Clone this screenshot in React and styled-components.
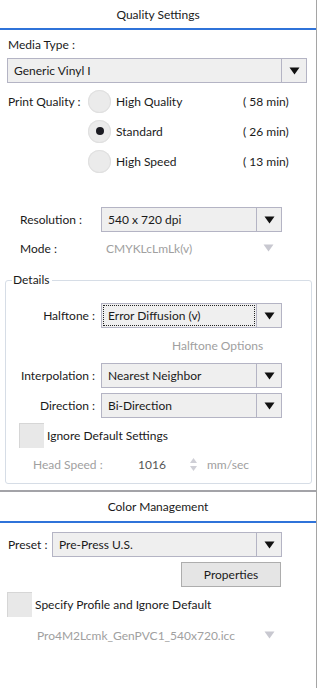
import React from "react";
import styled, { createGlobalStyle } from "styled-components";

const Global = createGlobalStyle`
  body {
    margin: 0;
    background: #fff;
    font-family: Lato, "Noto Sans", sans-serif;
    font-size: 12px;
    color: #1a1a1a;
  }
`;

const Panel = styled.div`
  width: 316px;
  min-height: 688px;
  border-right: 1px solid #a5a5a5;
  display: flex;
  flex-direction: column;
`;

const SectionHeader = styled.div`
  height: ${p => p.h || 28}px;
  display: flex;
  align-items: center;
  justify-content: center;
  border-bottom: 2px solid #2f73d9;
  border-top: ${p => (p.sep ? "2px solid #a3a3a8" : "none")};
  margin-top: ${p => p.top || 0}px;
`;

const Label = styled.div`
  height: 16px;
  line-height: 16px;
  padding-left: ${p => p.left || 0}px;
  margin-top: ${p => p.top || 0}px;
  white-space: nowrap;
`;

const SelectBox = styled.div`
  box-sizing: border-box;
  width: ${p => p.w}px;
  height: 25px;
  margin-left: ${p => p.left || 0}px;
  margin-top: ${p => p.top || 0}px;
  border: 1px solid #b4b4c4;
  background: #efefef;
  display: flex;
  flex-shrink: 0;
`;

const SelectText = styled.div`
  flex: 1;
  display: flex;
  align-items: center;
  padding-left: 4px;
  margin: 1px;
  border: 1px ${p => (p.focus ? "dotted #222" : "solid transparent")};
  white-space: nowrap;
`;

const ArrowCell = styled.div`
  width: 24px;
  border-left: 1px solid #b4b4c4;
  display: flex;
  align-items: center;
  justify-content: center;
`;

const Arrow = ({ color = "#111" }) => (
  <svg width="11" height="8" viewBox="0 0 11 8">
    <polygon points="0.5,0.5 10.5,0.5 5.5,7.5" fill={color} />
  </svg>
);

const Select = ({ w, left, top, focus, children }) => (
  <SelectBox w={w} left={left} top={top}>
    <SelectText focus={focus}>{children}</SelectText>
    <ArrowCell>
      <Arrow />
    </ArrowCell>
  </SelectBox>
);

const QualityBlock = styled.div`
  display: flex;
  margin-top: 3px;
  padding-left: 8px;
`;

const QualityLabel = styled.div`
  width: 80px;
  height: 30px;
  display: flex;
  align-items: center;
`;

const RadioList = styled.div`
  display: flex;
  flex-direction: column;
`;

const RadioRow = styled.div`
  height: 30px;
  display: flex;
  align-items: center;
`;

const RadioCircle = styled.div`
  width: 23px;
  height: 23px;
  border-radius: 50%;
  background: #ebebeb;
  box-shadow: inset 0 0 0 1px #e0e0e0;
  display: flex;
  align-items: center;
  justify-content: center;
  margin-right: 5px;
  &::after {
    content: "";
    width: 8px;
    height: 8px;
    border-radius: 50%;
    background: ${p => (p.checked ? "#1b1b22" : "transparent")};
  }
`;

const RadioText = styled.div`
  width: 127px;
`;

const FormRow = styled.div`
  display: flex;
  align-items: center;
  height: ${p => p.h || 25}px;
  margin-top: ${p => p.top || 0}px;
`;

const RowLabel = styled.div`
  box-sizing: border-box;
  width: ${p => p.w}px;
  padding-left: ${p => p.left || 0}px;
  text-align: ${p => p.align || "left"};
  color: ${p => (p.disabled ? "#a0a0a0" : "#1a1a1a")};
  white-space: nowrap;
  flex-shrink: 0;
`;

const Value = styled.div`
  box-sizing: border-box;
  color: ${p => p.color || "#a0a0a0"};
  width: ${p => p.w}px;
  padding-left: ${p => p.left || 0}px;
  white-space: nowrap;
  flex-shrink: 0;
`;

const Details = styled.fieldset`
  margin: 14px 0 0 5px;
  width: 307px;
  box-sizing: border-box;
  padding: 0 0 9px 0;
  border: 1px solid #d6dde6;
  border-radius: 3px;
  min-width: 0;
`;

const Legend = styled.legend`
  margin-left: 6px;
  padding: 0 2px 0 1px;
  line-height: 16px;
`;

const OptionsLink = styled.div`
  color: #a0a0a0;
  padding-left: 166px;
  height: 20px;
  line-height: 20px;
  margin-top: 8px;
`;

const Check = styled.div`
  width: 25px;
  height: 25px;
  box-sizing: border-box;
  background: #e8e8e8;
  border-top: 1px solid #d6d6d6;
  border-left: 1px solid #d6d6d6;
  margin-left: ${p => p.left || 0}px;
  margin-right: 3px;
  flex-shrink: 0;
`;

const Spinner = styled.div`
  display: flex;
  flex-direction: column;
  gap: 3px;
  margin-right: 10px;
`;

const SpinArrow = ({ up }) => (
  <svg width="7" height="5" viewBox="0 0 7 5">
    <polygon points={up ? "3.5,0 7,5 0,5" : "0,0 7,0 3.5,5"} fill="#cfcfd6" />
  </svg>
);

const ButtonRow = styled.div`
  display: flex;
  padding-left: 181px;
  margin-top: 5px;
`;

const Button = styled.div`
  width: 100px;
  height: 25px;
  box-sizing: border-box;
  border: 1px solid #adadad;
  background: #e5e5e5;
  display: flex;
  align-items: center;
  justify-content: center;
`;

const App = () => {
  return (
    <Panel>
      <Global />
      <SectionHeader>Quality Settings</SectionHeader>
      <Label left={8} top={7}>Media Type :</Label>
      <Select w={300} left={7} top={5}>Generic Vinyl I</Select>

      <QualityBlock>
        <QualityLabel>Print Quality :</QualityLabel>
        <RadioList>
          <RadioRow>
            <RadioCircle />
            <RadioText>High Quality</RadioText>
            <span>( 58 min)</span>
          </RadioRow>
          <RadioRow>
            <RadioCircle checked />
            <RadioText>Standard</RadioText>
            <span>( 26 min)</span>
          </RadioRow>
          <RadioRow>
            <RadioCircle />
            <RadioText>High Speed</RadioText>
            <span>( 13 min)</span>
          </RadioRow>
        </RadioList>
      </QualityBlock>

      <FormRow top={31}>
        <RowLabel w={101} left={20}>Resolution :</RowLabel>
        <Select w={181}>540 x 720 dpi</Select>
      </FormRow>
      <FormRow h={20} top={6}>
        <RowLabel w={101} left={20}>Mode :</RowLabel>
        <Value w={162} left={5}>CMYKLcLmLk(v)</Value>
        <Arrow color="#c8c8d0" />
      </FormRow>

      <Details>
        <Legend>Details</Legend>
        <FormRow top={15}>
          <RowLabel w={89} align="right">Halftone :</RowLabel>
          <Select w={181} left={6} focus>Error Diffusion (v)</Select>
        </FormRow>
        <OptionsLink>Halftone Options</OptionsLink>
        <FormRow top={7}>
          <RowLabel w={89} align="right">Interpolation :</RowLabel>
          <Select w={181} left={6}>Nearest Neighbor</Select>
        </FormRow>
        <FormRow top={5}>
          <RowLabel w={89} align="right">Direction :</RowLabel>
          <Select w={181} left={6}>Bi-Direction</Select>
        </FormRow>
        <FormRow top={5}>
          <Check left={13} />
          <span>Ignore Default Settings</span>
        </FormRow>
        <FormRow h={20} top={6}>
          <RowLabel w={132} left={27} disabled>Head Speed :</RowLabel>
          <Value w={52} color="#555">1016</Value>
          <Spinner>
            <SpinArrow up />
            <SpinArrow />
          </Spinner>
          <Value w={60}>mm/sec</Value>
        </FormRow>
      </Details>

      <SectionHeader sep h={29} top={6}>Color Management</SectionHeader>
      <FormRow top={9}>
        <RowLabel w={52} left={8}>Preset :</RowLabel>
        <Select w={230}>Pre-Press U.S.</Select>
      </FormRow>
      <ButtonRow>
        <Button>Properties</Button>
      </ButtonRow>
      <FormRow top={5}>
        <Check left={7} />
        <span>Specify Profile and Ignore Default</span>
      </FormRow>
      <FormRow h={20} top={8}>
        <Value w={264} left={37}>Pro4M2Lcmk_GenPVC1_540x720.icc</Value>
        <Arrow color="#c8c8d0" />
      </FormRow>
    </Panel>
  );
};

export default App;
